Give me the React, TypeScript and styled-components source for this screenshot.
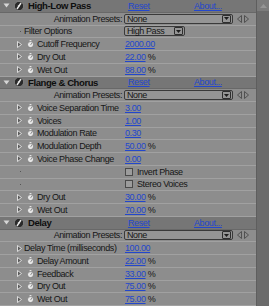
import React from "react"
import styled, { createGlobalStyle } from "styled-components"

const ROW_H = 12.75
const VALUE_X = 125

const GlobalStyle = createGlobalStyle`
	html, body {
		margin: 0;
		padding: 0;
		background: #8d8d8d;
	}
	body {
		font-family: "Liberation Sans", Arial, sans-serif;
		font-size: 9px;
		letter-spacing: -0.4px;
		color: #161616;
	}
`

const PanelElement = styled.div`
	width: 269px;
	height: 306px;
	display: flex;
	overflow: hidden;
	background: #8d8d8d;
`

const ListElement = styled.div`
	flex: 1;
	display: flex;
	flex-direction: column;
`

const ScrollbarElement = styled.div`
	width: 12px;
	background: #6b6b6b;
	border-left: 1px solid #5e5e5e;
	display: flex;
	flex-direction: column;
`

const ScrollButtonElement = styled.div`
	height: 11px;
	background: #7c7c7c;
	display: flex;
	align-items: center;
	justify-content: center;
`

const RowElement = styled.div<{ $header?: boolean }>`
	height: ${ROW_H}px;
	box-sizing: border-box;
	display: flex;
	align-items: center;
	flex-shrink: 0;
	background: ${props => props.$header ? "#767676" : "#8d8d8d"};
	border-bottom: 1px solid ${props => props.$header ? "#686868" : "#a1a1a1"};
	white-space: nowrap;
`

const LabelCellElement = styled.div<{ $indent: number, $right?: boolean }>`
	width: ${VALUE_X}px;
	flex-shrink: 0;
	box-sizing: border-box;
	display: flex;
	align-items: center;
	justify-content: ${props => props.$right ? "flex-end" : "flex-start"};
	padding-left: ${props => props.$indent}px;
	padding-right: ${props => props.$right ? 3 : 0}px;
	height: 100%;
`

const ValueCellElement = styled.div`
	flex: 1;
	display: flex;
	align-items: center;
	height: 100%;
`

const IconSlotElement = styled.span<{ $width: number }>`
	width: ${props => props.$width}px;
	flex-shrink: 0;
	display: flex;
	align-items: center;
	justify-content: center;
`

const HeaderTitleElement = styled.span`
	font-weight: bold;
	font-size: 9.5px;
	letter-spacing: -0.4px;
	color: #0e0e0e;
`

const LinkElement = styled.span`
	color: #2347cc;
	text-decoration: underline;
	text-underline-offset: 1px;
`

const HeaderLinksElement = styled.div`
	display: grid;
	grid-template-columns: 66px auto;
	align-items: center;
	padding-left: 3px;
`

const DropdownElement = styled.div<{ $width: number }>`
	width: ${props => props.$width}px;
	height: 10px;
	box-sizing: border-box;
	border: 1px solid #3a3a3a;
	border-radius: 2px;
	background: #959595;
	display: flex;
	align-items: center;
	justify-content: space-between;
	padding-left: 2px;
	margin-left: -1px;
`

const DropdownArrowElement = styled.span`
	width: 7px;
	height: 6px;
	border: 1px solid #2e2e2e;
	border-radius: 1px;
	margin-right: 1px;
	display: flex;
	align-items: center;
	justify-content: center;
`

const PresetNavElement = styled.span`
	display: flex;
	gap: 2px;
	margin-left: 4px;
`

const CheckboxElement = styled.span`
	width: 8px;
	height: 8px;
	box-sizing: border-box;
	border: 1px solid #4a4a4a;
	background: #9c9c9c;
	margin-right: 4px;
`

const DotElement = styled.span`
	width: 1px;
	height: 1px;
	background: #555;
`

function Twisty(props: { open?: boolean }) {
	if (props.open) {
		return (
			<svg width="7" height="5" viewBox="0 0 7 5">
				<path d="M0.5 0.5 L6.5 0.5 L3.5 4.5 Z" fill="#d6d6d6" />
			</svg>
		)
	}
	return (
		<svg width="5" height="7" viewBox="0 0 5 7">
			<path d="M0.5 0.5 L4.5 3.5 L0.5 6.5 Z" fill="#5c5c5c" stroke="#e6e6e6" strokeWidth="0.9" />
		</svg>
	)
}

function Stopwatch() {
	return (
		<svg width="7" height="8" viewBox="0 0 7 8">
			<rect x="2.6" y="0" width="1.8" height="1.4" fill="#e4e4e4" />
			<circle cx="3.5" cy="4.6" r="3" fill="#e8e8e8" stroke="#6a6a6a" strokeWidth="0.6" />
			<path d="M3.5 4.6 L5 3.4" stroke="#555" strokeWidth="0.8" />
		</svg>
	)
}

function FxIcon() {
	return (
		<svg width="10" height="10" viewBox="0 0 10 10">
			<circle cx="5" cy="5" r="4.6" fill="#2a2a2a" stroke="#9a9a9a" strokeWidth="0.6" />
			<path d="M3 8 L7 2" stroke="#e8e8e8" strokeWidth="1.4" />
			<path d="M3.8 4.8 L6 4.8" stroke="#e8e8e8" strokeWidth="0.8" />
		</svg>
	)
}

function DownArrow() {
	return (
		<svg width="5" height="3" viewBox="0 0 5 3">
			<path d="M0 0 L5 0 L2.5 3 Z" fill="#1e1e1e" />
		</svg>
	)
}

function Dropdown(props: { text: string, width: number }) {
	return (
		<DropdownElement $width={props.width}>
			<span>{props.text}</span>
			<DropdownArrowElement><DownArrow /></DropdownArrowElement>
		</DropdownElement>
	)
}

function HeaderRow(props: { title: string }) {
	return (
		<RowElement $header>
			<LabelCellElement $indent={1}>
				<IconSlotElement $width={11}><Twisty open /></IconSlotElement>
				<IconSlotElement $width={14}><FxIcon /></IconSlotElement>
				<IconSlotElement $width={2} />
				<HeaderTitleElement>{props.title}</HeaderTitleElement>
			</LabelCellElement>
			<HeaderLinksElement>
				<LinkElement>Reset</LinkElement>
				<LinkElement>About...</LinkElement>
			</HeaderLinksElement>
		</RowElement>
	)
}

function PresetsRow() {
	return (
		<RowElement>
			<LabelCellElement $indent={0} $right>Animation Presets:</LabelCellElement>
			<ValueCellElement>
				<Dropdown text="None" width={109} />
				<PresetNavElement>
					<svg width="5" height="8" viewBox="0 0 5 8">
						<path d="M4.5 0.5 L0.5 4 L4.5 7.5 Z" fill="none" stroke="#4a4a4a" strokeWidth="0.9" />
					</svg>
					<svg width="5" height="8" viewBox="0 0 5 8">
						<path d="M0.5 0.5 L4.5 4 L0.5 7.5 Z" fill="none" stroke="#4a4a4a" strokeWidth="0.9" />
					</svg>
				</PresetNavElement>
			</ValueCellElement>
		</RowElement>
	)
}

type PropertyKind = "animated" | "twisty" | "plain"

function PropertyRow(props: { label?: string, value?: string, kind: PropertyKind, children?: React.ReactNode }) {
	return (
		<RowElement>
			<LabelCellElement $indent={props.kind === "plain" ? 16 : 15}>
				{props.kind === "plain" ? (
					<IconSlotElement $width={8}><DotElement /></IconSlotElement>
				) : (
					<IconSlotElement $width={8}><Twisty /></IconSlotElement>
				)}
				{props.kind === "animated" ? <IconSlotElement $width={14}><Stopwatch /></IconSlotElement> : null}
				{props.kind === "twisty" ? <IconSlotElement $width={1} /> : null}
				{props.label ? <span>{props.label}</span> : null}
			</LabelCellElement>
			<ValueCellElement>
				{props.value ? <LinkElement>{props.value.split(" ")[0]}</LinkElement> : null}
				{props.value && props.value.includes("%") ? <span>&nbsp;%</span> : null}
				{props.children}
			</ValueCellElement>
		</RowElement>
	)
}

function CheckRow(props: { label: string }) {
	return (
		<PropertyRow kind="plain">
			<CheckboxElement />
			<span>{props.label}</span>
		</PropertyRow>
	)
}

function App() {
	return (
		<PanelElement>
			<GlobalStyle />
			<ListElement>
				<HeaderRow title="High-Low Pass" />
				<PresetsRow />
				<PropertyRow kind="plain" label="Filter Options">
					<Dropdown text="High Pass" width={61} />
				</PropertyRow>
				<PropertyRow kind="animated" label="Cutoff Frequency" value="2000.00" />
				<PropertyRow kind="animated" label="Dry Out" value="22.00 %" />
				<PropertyRow kind="animated" label="Wet Out" value="88.00 %" />

				<HeaderRow title="Flange & Chorus" />
				<PresetsRow />
				<PropertyRow kind="animated" label="Voice Separation Time" value="3.00" />
				<PropertyRow kind="animated" label="Voices" value="1.00" />
				<PropertyRow kind="animated" label="Modulation Rate" value="0.30" />
				<PropertyRow kind="animated" label="Modulation Depth" value="50.00 %" />
				<PropertyRow kind="animated" label="Voice Phase Change" value="0.00" />
				<CheckRow label="Invert Phase" />
				<CheckRow label="Stereo Voices" />
				<PropertyRow kind="animated" label="Dry Out" value="30.00 %" />
				<PropertyRow kind="animated" label="Wet Out" value="70.00 %" />

				<HeaderRow title="Delay" />
				<PresetsRow />
				<PropertyRow kind="twisty" label="Delay Time (milliseconds)" value="100.00" />
				<PropertyRow kind="animated" label="Delay Amount" value="22.00 %" />
				<PropertyRow kind="animated" label="Feedback" value="33.00 %" />
				<PropertyRow kind="animated" label="Dry Out" value="75.00 %" />
				<PropertyRow kind="animated" label="Wet Out" value="75.00 %" />
			</ListElement>
			<ScrollbarElement>
				<ScrollButtonElement>
					<svg width="7" height="4" viewBox="0 0 7 4">
						<path d="M0 4 L3.5 0 L7 4 Z" fill="#959595" />
					</svg>
				</ScrollButtonElement>
			</ScrollbarElement>
		</PanelElement>
	)
}

export default App
